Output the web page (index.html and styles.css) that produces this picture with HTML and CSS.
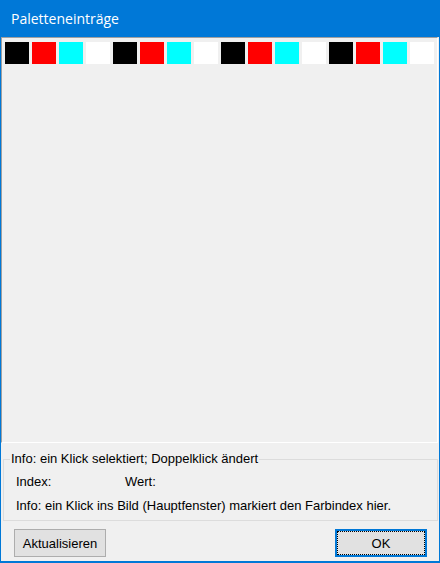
FILE: index.html
```html
<!DOCTYPE html>
<html lang="de">

<head>
    <meta charset="UTF-8">
    <meta name="viewport" content="width=device-width, initial-scale=1.0">
    <title>Paletteneinträge</title>
    <link rel="stylesheet" href="styles.css">
</head>

<body>
    <div class="window">
        <div class="titlebar">Paletteneinträge</div>

        <div class="palette">
            <div class="swatch black"></div>
            <div class="swatch red"></div>
            <div class="swatch cyan"></div>
            <div class="swatch white"></div>
            <div class="swatch black"></div>
            <div class="swatch red"></div>
            <div class="swatch cyan"></div>
            <div class="swatch white"></div>
            <div class="swatch black"></div>
            <div class="swatch red"></div>
            <div class="swatch cyan"></div>
            <div class="swatch white"></div>
            <div class="swatch black"></div>
            <div class="swatch red"></div>
            <div class="swatch cyan"></div>
            <div class="swatch white"></div>
        </div>

        <fieldset class="info">
            <legend>Info: ein Klick selektiert; Doppelklick ändert</legend>
            <div class="row">
                <span class="label">Index:</span>
                <span class="label">Wert:</span>
            </div>
            <div class="row">Info: ein Klick ins Bild (Hauptfenster) markiert den Farbindex hier.</div>
        </fieldset>

        <div class="buttons">
            <button class="btn">Aktualisieren</button>
            <button class="btn default">OK</button>
        </div>
    </div>
</body>

</html>
```

FILE: styles.css
```css
html, body {
    margin: 0;
    height: 100%;
}

body {
    font-family: "Liberation Sans", Arial, sans-serif;
    font-size: 13px;
    color: #000;
}

.window {
    width: 440px;
    height: 563px;
    box-sizing: border-box;
    border: 1px solid #0078d7;
    border-top: 0;
    border-bottom-width: 2px;
    background-color: #f0f0f0;
    display: flex;
    flex-direction: column;
}

.titlebar {
    height: 37px;
    flex: none;
    background-color: #0078d7;
    color: #fff;
    font-family: "Open Sans", "Noto Sans", sans-serif;
    font-size: 14px;
    line-height: 37px;
    padding-left: 10px;
}

/* Liste mit den Farbfeldern */
.palette {
    height: 406px;
    flex: none;
    box-sizing: border-box;
    margin-right: 1px;
    border-top: 1px solid #a0a0a0;
    border-left: 1px solid #a0a0a0;
    border-right: 1px solid #fff;
    border-bottom: 1px solid #fff;
    padding: 4px 0 0 3px;
    display: flex;
    flex-wrap: wrap;
    align-content: flex-start;
    gap: 3px;
}

.swatch {
    width: 24px;
    height: 22px;
}

.black { background-color: #000; }
.red { background-color: #f00; }
.cyan { background-color: #0ff; }
.white { background-color: #fff; }

.info {
    margin: 9px 1px 0 2px;
    padding: 9px 0 7px 12px;
    border: 1px solid #dcdcdc;
    min-width: 0;
}

.info legend {
    margin-left: -6px;
    padding: 0 1px;
    line-height: 14px;
}

.row {
    display: flex;
    line-height: 14px;
}

.row + .row {
    margin-top: 10px;
}

.label {
    width: 109px;
}

.buttons {
    flex: 1;
    display: flex;
    justify-content: space-between;
    align-items: flex-start;
    padding: 8px 12px 0 13px;
}

.btn {
    width: 92px;
    height: 28px;
    box-sizing: border-box;
    background-color: #e1e1e1;
    border: 1px solid #adadad;
    font-family: "Liberation Sans", Arial, sans-serif;
    font-size: 13px;
    color: #000;
    padding: 0;
}

.btn.default {
    border: 2px solid #0078d7;
    outline: 1px dotted #000;
    outline-offset: -3px;
}
```
